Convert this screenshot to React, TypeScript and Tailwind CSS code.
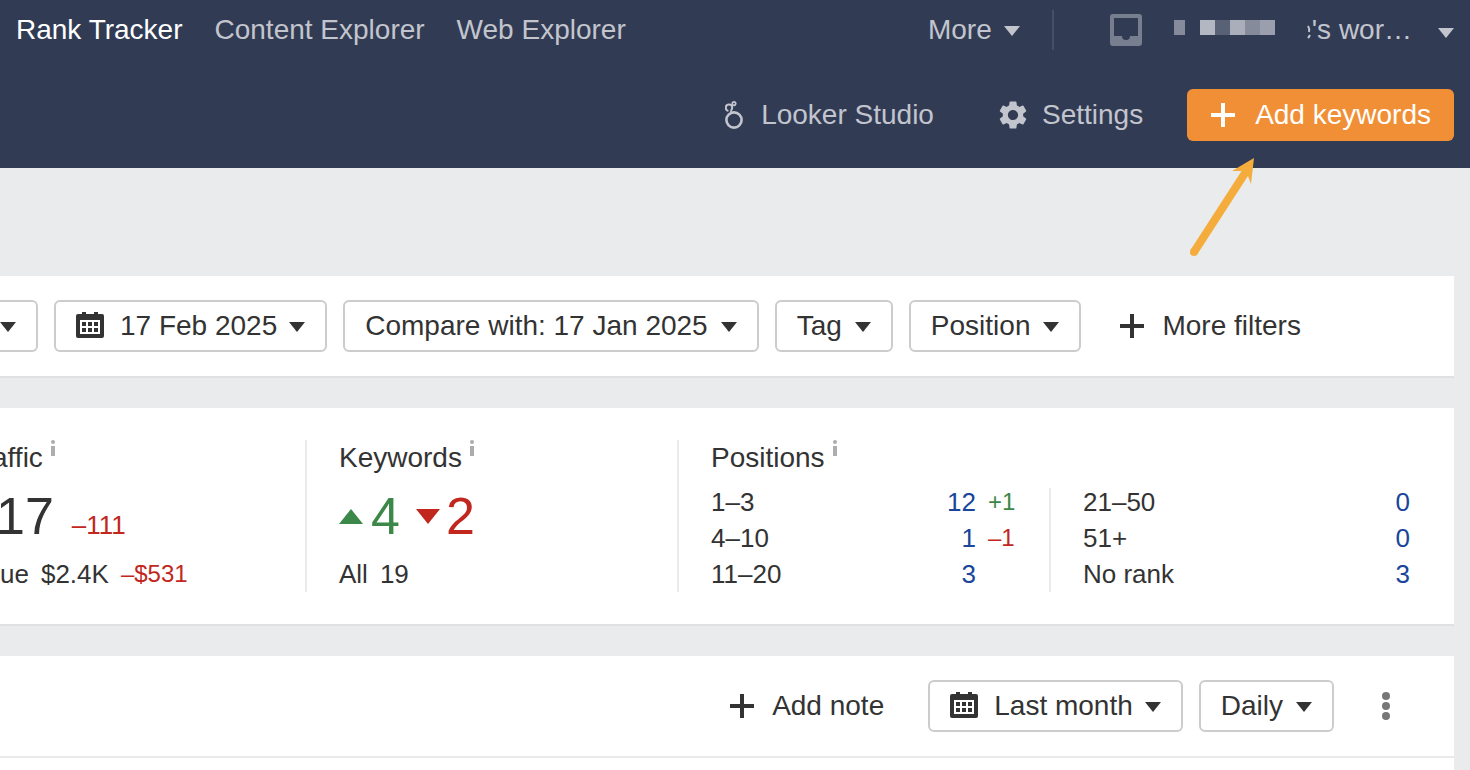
import React from 'react'
import clsx from 'clsx'
import { MdSettings } from 'react-icons/md'

const navLinks = [
  { label: 'Rank Tracker', active: true },
  { label: 'Content Explorer', active: false },
  { label: 'Web Explorer', active: false },
]

const topPositions = [
  { range: '1–3', count: 12, change: '+1' },
  { range: '4–10', count: 1, change: '–1' },
  { range: '11–20', count: 3, change: '' },
]

const lowPositions = [
  { range: '21–50', count: 0 },
  { range: '51+', count: 0 },
  { range: 'No rank', count: 3 },
]

const Caret = () => (
  <svg width="16" height="12" viewBox="0 0 16 12" fill="currentColor" className="shrink-0" aria-hidden="true">
    <path d="M0 2h16L8 12z" />
  </svg>
)

const Plus = () => (
  <svg width="24" height="24" viewBox="0 0 24 24" fill="currentColor" className="shrink-0" aria-hidden="true">
    <path d="M10 0h4v10h10v4H14v10h-4V14H0v-4h10z" />
  </svg>
)

const Calendar = () => (
  <svg width="28" height="28" viewBox="0 0 28 28" fill="currentColor" className="shrink-0" aria-hidden="true">
    <path
      fillRule="evenodd"
      d="M6 0h4v2h8V0h4v2h4a2 2 0 0 1 2 2v20a2 2 0 0 1-2 2H2a2 2 0 0 1-2-2V4a2 2 0 0 1 2-2h4zM4 8v14h20V8z"
    />
    <path d="M6 10h4v4H6zM12 10h4v4h-4zM18 10h4v4h-4zM6 16h4v4H6zM12 16h4v4h-4zM18 16h4v4h-4z" />
  </svg>
)

const Inbox = () => (
  <svg width="32" height="32" viewBox="0 0 32 32" fill="currentColor" aria-hidden="true">
    <path
      fillRule="evenodd"
      d="M3 0h26a3 3 0 0 1 3 3v26a3 3 0 0 1-3 3H3a3 3 0 0 1-3-3V3a3 3 0 0 1 3-3zM4 4v18h8a4 4 0 0 0 8 0h8V4z"
    />
  </svg>
)

const Looker = () => (
  <svg width="18" height="28" viewBox="0 0 18 28" fill="none" stroke="currentColor" aria-hidden="true">
    <circle cx="9" cy="19" r="7.6" strokeWidth="2.6" />
    <path d="M6.6 12 5.8 9.4" strokeWidth="2" />
    <path d="M3.4 9.9A3.200 3.200 0 1 1 7.200 6.700 3.200 3.200 0 0 1 5.800 9.400" strokeWidth="2" />
    <path d="M6.200 4.600 7.600 3.600" strokeWidth="1.200" />
    <circle cx="9" cy="2.600" r="1.700" strokeWidth="1.700" />
  </svg>
)

const InfoMark = () => (
  <svg width="4" height="16" viewBox="0 0 4 16" fill="#adadad" className="mb-1 shrink-0" aria-hidden="true">
    <circle cx="2" cy="2" r="2" />
    <path d="M0 6h4v10H0z" />
  </svg>
)

const Arrow = () => (
  <svg
    width="72"
    height="104"
    viewBox="0 0 72 104"
    className="pointer-events-none absolute top-[67px] left-0"
    aria-hidden="true"
  >
    <path d="M7 96 60 14" stroke="#f4ad3d" strokeWidth="8" />
    <circle cx="7" cy="96" r="4" fill="#f4ad3d" />
    <path d="M67 2 45 15l9 0 7 5 3 8z" fill="#f4ad3d" />
  </svg>
)

const Dropdown = ({ label, calendar }: { label: string; calendar?: boolean }) => (
  <button
    type="button"
    className={clsx(
      'flex h-[52px] shrink-0 items-center rounded-md border-2 border-[#cccccc] bg-white px-5',
      calendar ? 'gap-3' : 'gap-[13px]'
    )}
  >
    {calendar && (
      <span className="mr-1">
        <Calendar />
      </span>
    )}
    {label}
    <Caret />
  </button>
)

const PlusButton = ({ label }: { label: string }) => (
  <button type="button" className="flex h-[52px] shrink-0 items-center gap-[18px]">
    <Plus />
    {label}
  </button>
)

const CardTitle = ({ title }: { title: string }) => (
  <h2 className="flex h-9 items-center gap-2">
    {title}
    <span className="self-start">
      <InfoMark />
    </span>
  </h2>
)

// Grey blocks that stand in for the hidden part of the account name
const MaskedName = () => (
  <svg width="138" height="20" viewBox="0 0 138 20" aria-hidden="true">
    <path d="M0 0h11v15H0z" fill="#858b9b" />
    <path d="M26 0h15v15H26z" fill="#b3b7c2" />
    <path d="M41 0h15v15H41z" fill="#596176" />
    <path d="M56 0h15v15H56z" fill="#aaaebb" />
    <path d="M71 0h15v15H71z" fill="#858b9b" />
    <path d="M86 0h15v15H86z" fill="#9b9fad" />
    <path d="M134 6q2 3 1 6M134 18q1-1 2-3" stroke="#c2c5cd" strokeWidth="2" fill="none" />
  </svg>
)

const Header = () => (
  <header className="bg-[#323b54] pr-4 pl-4 text-[#c2c5cd]">
    <div className="flex h-[60px] items-center">
      <nav className="flex gap-8">
        {navLinks.map((link) => (
          <a key={link.label} href="#" className={clsx(link.active && 'text-white')}>
            {link.label}
          </a>
        ))}
      </nav>
      <button type="button" className="ml-auto flex items-center gap-3">
        More
        <Caret />
      </button>
      <div className="ml-8 h-10 w-[2px] bg-[#474f66]" />
      <button type="button" aria-label="Inbox" className="ml-14 text-[#777e8f]">
        <Inbox />
      </button>
      <button type="button" aria-label="Workspace" className="ml-8 flex items-center">
        <MaskedName />
        <span className="mr-[26px]">'s wor…</span>
        <span className="pt-1">
          <Caret />
        </span>
      </button>
    </div>
    <div className="flex items-center justify-end pt-[29px] pb-[27px]">
      <a href="#" className="flex items-center gap-[18px]">
        <Looker />
        Looker Studio
      </a>
      <button type="button" className="ml-[62px] flex items-center gap-3">
        <MdSettings size={34} />
        Settings
      </button>
      <div className="relative ml-11">
        <button
          type="button"
          className="flex h-[52px] items-center gap-5 rounded-md bg-[#f18f36] pr-[23px] pl-6 text-white"
        >
          <Plus />
          Add keywords
        </button>
        <Arrow />
      </div>
    </div>
  </header>
)

const Filters = () => (
  <section className="mt-[108px] flex items-center gap-4 border-b-2 border-[#dfe0e2] bg-white py-6">
    <button
      type="button"
      aria-label="Location"
      className="flex h-[52px] shrink-0 items-center rounded-r-md border-2 border-l-0 border-[#cccccc] pr-5"
    >
      <Caret />
    </button>
    <Dropdown label="17 Feb 2025" calendar />
    <Dropdown label="Compare with: 17 Jan 2025" />
    <Dropdown label="Tag" />
    <Dropdown label="Position" />
    <div className="ml-[23px]">
      <PlusButton label="More filters" />
    </div>
  </section>
)

const Stats = () => (
  <section className="mt-[30px] grid grid-cols-[305px_372fr_777fr] overflow-hidden border-b-2 border-[#dfe0e2] bg-white py-8">
    <div>
      <div className="-ml-2">
        <CardTitle title="affic" />
      </div>
      <p className="-ml-1 flex h-20 items-baseline gap-[18px] text-[52px] leading-[80px]">
        17 <span className="text-[26px] text-[#c1271d]">–111</span>
      </p>
      <p className="flex h-9 items-center gap-3 text-[26px]">
        <span>ue</span>
        <span>$2.4K</span>
        <span className="text-2xl text-[#c1271d]">–$531</span>
      </p>
    </div>

    <div className="border-l-2 border-[#e9eaeb] pl-8">
      <CardTitle title="Keywords" />
      <p className="flex h-20 items-center text-[52px]">
        <svg width="24" height="15" viewBox="0 0 24 15" fill="#3c8848" aria-hidden="true">
          <path d="M12 0l12 15H0z" />
        </svg>
        <span className="ml-2 text-[#3c8848]">4</span>
        <svg width="24" height="15" viewBox="0 0 24 15" fill="#c1271d" className="ml-4" aria-hidden="true">
          <path d="M0 0h24L12 15z" />
        </svg>
        <span className="ml-[6px] text-[#c1271d]">2</span>
      </p>
      <p className="flex h-9 items-center gap-3 text-[26px]">
        <span>All</span>
        <span>19</span>
      </p>
    </div>

    <div className="border-l-2 border-[#e9eaeb] pl-8">
      <CardTitle title="Positions" />
      <div className="grid grid-cols-[338fr_405fr] pt-3 text-[26px] leading-9">
        <table className="-mt-1 w-full self-start">
          <tbody>
            {topPositions.map((row) => (
              <tr key={row.range} className="h-9">
                <th scope="row" className="p-0 text-left font-normal">{row.range}</th>
                <td className="p-0 text-right text-[#19459b]">{row.count}</td>
                <td
                  className={clsx(
                    'w-[73px] p-0 pl-3 text-left text-2xl leading-9',
                    row.change === '+1' ? 'text-[#3c8848]' : 'text-[#c1271d]'
                  )}
                >
                  {row.change}
                </td>
              </tr>
            ))}
          </tbody>
        </table>
        <div className="border-l-2 border-[#e9eaeb] pr-11 pl-8">
          <table className="-mt-1 w-full">
            <tbody>
              {lowPositions.map((row) => (
                <tr key={row.range} className="h-9">
                  <th scope="row" className="p-0 text-left font-normal">{row.range}</th>
                  <td className="p-0 text-right text-[#19459b]">{row.count}</td>
                </tr>
              ))}
            </tbody>
          </table>
        </div>
      </div>
    </div>
  </section>
)

const ChartPanel = () => (
  <section className="mt-[30px] grow bg-white pb-3">
    <div className="flex items-center justify-end gap-4 border-b-2 border-[#e9eaeb] py-6 pr-16">
      <div className="mr-7">
        <PlusButton label="Add note" />
      </div>
      <Dropdown label="Last month" calendar />
      <Dropdown label="Daily" />
      <button type="button" aria-label="More options" className="ml-8 text-[#777777]">
        <svg width="8" height="28" viewBox="0 0 8 28" fill="currentColor" aria-hidden="true">
          <circle cx="4" cy="4" r="4" />
          <circle cx="4" cy="14" r="4" />
          <circle cx="4" cy="24" r="4" />
        </svg>
      </button>
    </div>
  </section>
)

const App = () => {
  return (
    <div className="flex min-h-screen flex-col overflow-hidden bg-[#eaebed] font-['Helvetica_Neue','Liberation_Sans',Arial,sans-serif] text-[28px] leading-9 whitespace-nowrap text-[#333333]">
      <Header />
      <main className="mr-4 flex grow flex-col">
        <Filters />
        <Stats />
        <ChartPanel />
      </main>
    </div>
  )
}

export default App
